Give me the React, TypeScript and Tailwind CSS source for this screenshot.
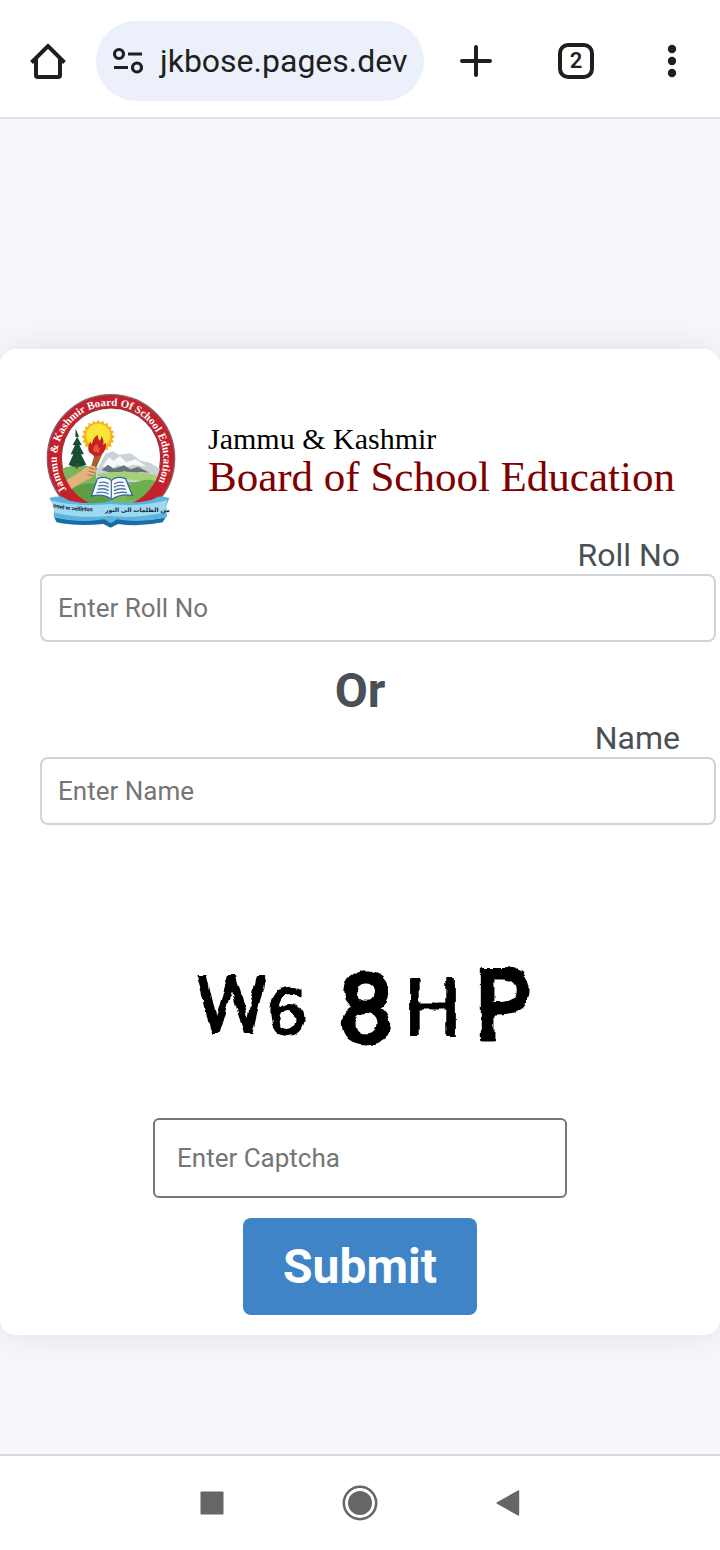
const iconButton = "flex h-20 items-center justify-center text-[#1f1f1f]";

function BrowserBar() {
  return (
    <header className="flex items-center border-b-2 border-[#e3e3e3] bg-white pt-[21px] pb-4">
      <button type="button" aria-label="Home" className={`${iconButton} w-24`}>
        <svg width="36" height="36" viewBox="0 0 36 36" fill="none" stroke="currentColor" strokeWidth="4">
          <path d="M1.5 19.5 18 3l16.500 16.500" />
          <path d="M6 15v17.200q0 1.800 1.800 1.800h20.400q1.800 0 1.800-1.800V15" />
        </svg>
      </button>
      <div className="flex h-20 min-w-0 flex-1 items-center gap-4 rounded-full bg-[#ebf0fa] pl-4">
        <svg width="32" height="28" viewBox="0 0 32 28" fill="none" stroke="#1f1f1f" strokeWidth="3.200" className="shrink-0">
          <circle cx="7" cy="7" r="4.500" />
          <path d="M16 7h14M2 20.500h14" />
          <circle cx="25" cy="20.500" r="4.500" />
        </svg>
        <span className="text-[32px] leading-10 text-[#1f1f1f]">jkbose.pages.dev</span>
      </div>
      <button type="button" aria-label="New tab" className={`${iconButton} w-26`}>
        <svg width="32" height="32" viewBox="0 0 32 32" stroke="currentColor" strokeWidth="4" strokeLinecap="round">
          <path d="M2 16h28M16 2v28" />
        </svg>
      </button>
      <button type="button" aria-label="Tabs" className={`${iconButton} w-24`}>
        <span className="flex size-9 items-center justify-center rounded-[10px] border-4 border-[#1f1f1f] text-[22px] leading-none font-semibold">
          2
        </span>
      </button>
      <button type="button" aria-label="Menu" className={`${iconButton} w-24`}>
        <svg width="10" height="34" viewBox="0 0 10 34" fill="currentColor" overflow="visible">
          <circle cx="5" cy="5" r="4.200" />
          <circle cx="5" cy="17" r="4.200" />
          <circle cx="5" cy="29" r="4.200" />
        </svg>
      </button>
    </header>
  );
}

function Emblem() {
  return (
    <svg viewBox="0 0 450 450" className="size-[150px] shrink-0" role="img" aria-label="Board emblem">
      <defs>
        <clipPath id="scene">
          <circle cx="225" cy="221" r="150" />
        </clipPath>
        <path id="ring-text" d="M92 318A160 160 0 1 1 350 322" />
        <path id="motto" d="M50 370Q130 388 216 380" />
      </defs>
      <circle cx="225" cy="223" r="191" fill="#c3222d" stroke="#87606a" strokeWidth="4" />
      <circle cx="225" cy="221" r="149" fill="#fff" stroke="#8b2a35" strokeWidth="3" />
      <g clipPath="url(#scene)">
        <path d="M60 262q60-30 120-10l220 0v140H60z" fill="#7cb65c" />
        <path d="M180 262l28-52 22-8 20 10 34-4 30 22 28 6 50 32v26H180z" fill="#c9d2d6" />
        <path d="M200 246l18-26 14 10 20-14 18 18 30-8 32 22-40-6-26 10-20-10-26 16z" fill="#f6fafb" />
        <path d="M196 258l20-16 18 12 30-10 20 12 22-8 34 18-26-2-24 6-24-8-30 8z" fill="#66757b" />
        <path d="M184 270q90-16 190 6l-10 24q-90-22-170-10z" fill="#a6cf78" />
        <path d="M110 312q60-32 130 8l-30 50-110-20z" fill="#5d9d45" />
        <path d="M280 304q60-30 90-6l-30 56-70-10z" fill="#6eae4c" />
      </g>
      <path
        d="M187 107l6 9 9-6 3 10 11-3 0 11 11 0-3 11 10 3-6 9 9 7-9 7 6 9-10 3 3 11-11 0 0 11-11-3-3 10-9-6-6 9-7-9-9 6-3-10-11 3 0-11-11 0 3-11-10-3 6-9-9-7 9-7-6-9 10-3-3-11 11 0 0-11 11 3 3-10 9 6z"
        fill="#f6b51c"
      />
      <circle cx="187" cy="155" r="36" fill="#fbe43a" />
      <path d="M119 134l10 24-5 1 13 24-7 1 14 27-9 0 16 31q-31 13-53 0l14-31-8 0 13-27-7-1 13-24-5-1z" fill="#174e31" />
      <path d="M122 236v18" stroke="#5b4026" strokeWidth="6" />
      <path d="M178 204l22 4-29 66-12-5z" fill="#a4612c" />
      <path d="M159 204q-6-20 5-31l4 9q0-18 17-30 0 12 5 18 7-5 7-14 9 18 4 27l8-7q5 20-14 37l-18 5z" fill="#c61f26" />
      <path d="M172 202q-3-14 11-23 2 11 9 13l-3 15z" fill="#ed5339" />
      <path d="M92 288q24-15 45-28 12-16 38-14 10 8 2 21-10 19-36 26l-35 22z" fill="#e6b27b" />
      <path d="M160 252l18 4M158 262l18 4M154 272l16 3" stroke="#a26c40" strokeWidth="3" />
      <path d="M166 336l18-52q28-10 42 6 15-16 43-6l20 50q-36-6-61 12-26-18-62-10z" fill="#f5faff" stroke="#326a9d" strokeWidth="4" />
      <path d="M226 290v54M190 296q18-5 28 4M187 306q20-5 31 4M184 316q22-5 34 4M181 326q24-5 37 4M234 300q14-9 29-4M234 310q15-9 32-4M234 320q17-9 36-4M234 330q18-8 39-4" fill="none" stroke="#5375a3" strokeWidth="4" />
      <text fill="#fff" fontFamily="Liberation Serif, serif" fontWeight="700" fontSize="33">
        <textPath href="#ring-text">Jammu &amp; Kashmir Board Of School Education</textPath>
      </text>
      <path d="M54 400q80 16 150 5l19 12 20-12q80 10 146-5l-9 15q-68 14-134 5l-22 11-22-11q-80 8-140-5z" fill="#176ea4" />
      <path d="M40 342q16-5 38-4l22 12q70 14 124 2 60 12 122-4l20-10q20-2 34 4l-9 24 2 34q-80 18-150 6l-18 11-20-11q-80 12-152-6l2-32z" fill="#5bb4df" />
      <path d="M46 350q90 20 176 10 90 10 172-12l-8 38q-90 18-164 10-94 8-166-10z" fill="#9ed9f2" />
      <g fill="#15253a">
        <text fontSize="15" fontWeight="700" fontFamily="Noto Sans, sans-serif">
          <textPath href="#motto">तमसो मा ज्योतिर्गमय</textPath>
        </text>
        <text x="304" y="384" fontSize="18" fontWeight="700" textAnchor="middle" fontFamily="DejaVu Sans, sans-serif">
          من الظلمات الى النور
        </text>
      </g>
    </svg>
  );
}

function Captcha() {
  return (
    <svg viewBox="180 950 360 110" className="mx-auto mt-[125px] block h-[110px] w-[360px]" role="img" aria-label="Captcha">
      <defs>
        <filter id="rough" x="-5%" y="-5%" width="110%" height="110%">
          <feTurbulence type="fractalNoise" baseFrequency="0.08" numOctaves="2" seed="4" />
          <feDisplacementMap in="SourceGraphic" scale="6" xChannelSelector="R" yChannelSelector="G" />
        </filter>
      </defs>
      <g filter="url(#rough)" fill="#000" stroke="#000" strokeLinejoin="round" fontFamily="Roboto, sans-serif">
        <text x="196" y="1033" fontSize="80" strokeWidth="2">W</text>
        <text x="267" y="1034" fontSize="62" strokeWidth="2" fontFamily="DejaVu Sans, sans-serif">6</text>
        <text x="339" y="1042" fontSize="96" strokeWidth="5">8</text>
        <text x="404" y="1035" fontSize="80" strokeWidth="1">H</text>
        <text x="474" y="1039" fontSize="96" strokeWidth="5" fontFamily="Noto Sans, sans-serif">P</text>
      </g>
    </svg>
  );
}

const field =
  "box-content block h-8 w-full rounded-lg border-2 border-[#ced4da] bg-white px-4 py-4 text-[26px] text-[#495057] outline-none placeholder:text-[#757575]";
const label = "block pb-0.5 text-right text-[32px] leading-[34px] text-[#495057]";

export default function App() {
  return (
    <div className="flex min-h-screen flex-col overflow-x-hidden bg-[#f7f7fc] font-['Roboto',sans-serif]">
      <BrowserBar />
      <main className="flex-1 pt-[230px] pb-[119px]">
        <form
          className="rounded-2xl bg-white px-10 pt-[35px] pb-5 shadow-[0_0_40px_rgba(0,0,0,0.1)]"
          onSubmit={(event) => event.preventDefault()}
        >
          <div className="-ml-1 flex items-center gap-[22px]">
            <Emblem />
            <h1 className="mt-1 font-['Liberation_Serif',serif] whitespace-nowrap">
              <span className="block text-[30px] leading-8 text-black">Jammu &amp; Kashmir</span>
              <span className="block text-[43px] leading-11 text-[#800000]">Board of School Education</span>
            </h1>
          </div>
          <label htmlFor="roll" className={`${label} mt-1`}>
            Roll No
          </label>
          <input id="roll" type="text" placeholder="Enter Roll No" className={field} />
          <p className="mt-5 pb-0.5 text-center text-[48px] leading-[57px] font-bold text-[#495057]">Or</p>
          <label htmlFor="name" className={label}>
            Name
          </label>
          <input id="name" type="text" placeholder="Enter Name" className={field} />
          <Captcha />
          <input
            type="text"
            aria-label="Captcha text"
            placeholder="Enter Captcha"
            className="mx-auto mt-[58px] block h-20 w-[414px] rounded-md border-2 border-[#767676] bg-white px-[22px] text-[26px] text-black outline-none placeholder:text-[#757575]"
          />
          <button
            type="submit"
            className="mx-auto mt-5 block rounded-lg bg-[#3e84c6] px-10 py-5 text-[48px] leading-[57px] font-bold text-white"
          >
            Submit
          </button>
        </form>
      </main>
      <nav className="flex h-24 items-center justify-center gap-28 border-t-2 border-[#d9d9d9] bg-white text-[#666]">
        <button type="button" aria-label="Recent apps" className="flex size-9 items-center justify-center">
          <svg width="24" height="24" viewBox="0 0 24 24" fill="currentColor">
            <rect x="0.500" y="0.500" width="23" height="23" rx="1" />
          </svg>
        </button>
        <button type="button" aria-label="Home screen" className="flex size-9 items-center justify-center">
          <svg width="36" height="36" viewBox="0 0 36 36">
            <circle cx="18" cy="18" r="16.200" fill="none" stroke="currentColor" strokeWidth="2.500" />
            <circle cx="18" cy="18" r="12" fill="currentColor" />
          </svg>
        </button>
        <button type="button" aria-label="Back" className="flex size-9 items-center justify-center">
          <svg width="24" height="26" viewBox="0 0 24 26" fill="currentColor">
            <path d="M22 .4q1.200-.5 1.200.8v23.600q0 1.300-1.200.8L1 13.800q-1.200-.8 0-1.600z" />
          </svg>
        </button>
      </nav>
    </div>
  );
}
